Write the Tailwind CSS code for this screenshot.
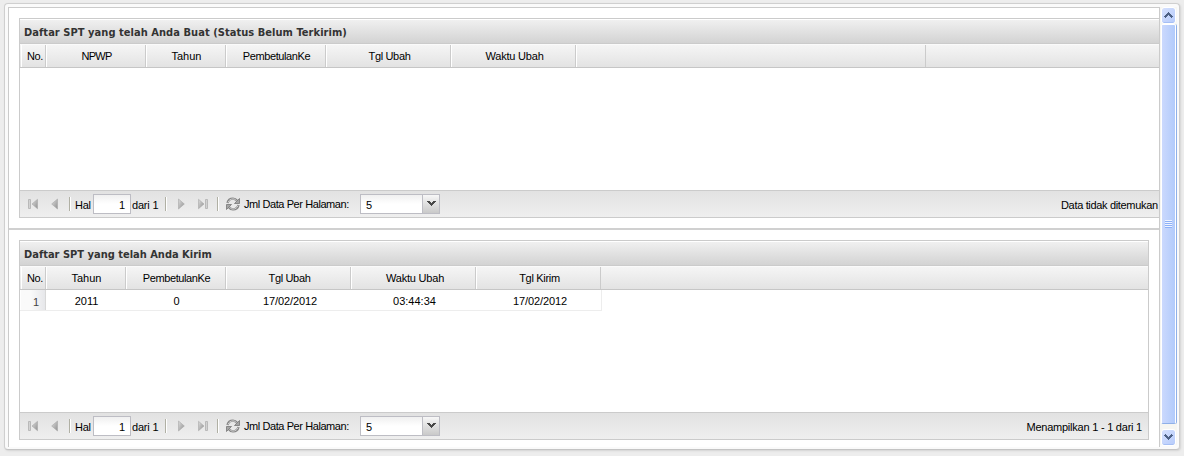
<!DOCTYPE html>
<html lang="id">
<head>
    <meta charset="UTF-8">
    <title>Daftar SPT</title>
    <script src="https://cdn.jsdelivr.net/npm/@tailwindcss/browser@4"></script>
</head>
<body class="bg-[#ededed] w-[1184px] h-[456px] overflow-hidden font-['Liberation_Sans',Arial,sans-serif] text-[11px] leading-[14px] text-black">
    <!-- icons shared by both paging toolbars -->
    <svg class="absolute w-0 h-0">
        <defs>
            <linearGradient id="grey" x1="0" y1="0" x2="1" y2="1">
                <stop offset="0" stop-color="#dedede"/>
                <stop offset="1" stop-color="#8f8f8f"/>
            </linearGradient>
        </defs>
        <symbol id="first" viewBox="0 0 10 12">
            <path d="M.5 1.500h2v9h-2z" fill="#d2d2d2" stroke="#b0b0b0" stroke-width=".8"/>
            <path d="M9.500 1.300v9.400L4 6z" fill="url(#grey)" stroke="#a8a8a8" stroke-width=".6"/>
        </symbol>
        <symbol id="prev" viewBox="0 0 7 12">
            <path d="M6.500 1v10L.7 6z" fill="url(#grey)" stroke="#a8a8a8" stroke-width=".6"/>
        </symbol>
        <symbol id="next" viewBox="0 0 7 12">
            <path d="M.5 1v10L6.300 6z" fill="url(#grey)" stroke="#a8a8a8" stroke-width=".6"/>
        </symbol>
        <symbol id="last" viewBox="0 0 10 12">
            <path d="M.5 1.300v9.400L6 6z" fill="url(#grey)" stroke="#a8a8a8" stroke-width=".6"/>
            <path d="M7.500 1.500h2v9h-2z" fill="#d2d2d2" stroke="#b0b0b0" stroke-width=".8"/>
        </symbol>
        <symbol id="refresh" viewBox="0 0 14 14">
            <path d="M1.500 6C2.200 3 4.600 1.600 7 1.600c1.800 0 3 .8 4 2.200" fill="none" stroke="#858585" stroke-width="2.400"/>
            <path d="M2 5.500C2.600 3.200 4.800 1.900 7 1.900c1.500 0 2.700.7 3.500 1.800" fill="none" stroke="#d0d0d0" stroke-width="1"/>
            <path d="M13.500 1.500v5H8.500z" fill="#a5a5a5" stroke="#6c6c6c" stroke-width=".7"/>
            <path d="M12.500 8C11.800 11 9.400 12.400 7 12.400c-1.800 0-3-.8-4-2.200" fill="none" stroke="#858585" stroke-width="2.400"/>
            <path d="M12 8.500C11.400 10.800 9.200 12.100 7 12.100c-1.500 0-2.700-.7-3.500-1.800" fill="none" stroke="#d0d0d0" stroke-width="1"/>
            <path d="M.5 12.500v-5h5z" fill="#a5a5a5" stroke="#6c6c6c" stroke-width=".7"/>
        </symbol>
        <symbol id="drop" viewBox="0 0 9 6">
            <path d="M0 0h3v1h1v1h1V1h1V0h3v1H8v1H7v1H6v1H5v1H4V4H3V3H2V2H1V1H0z" fill="#484848"/>
        </symbol>
        <symbol id="chevron" viewBox="0 0 9 6">
            <path d="M4 0h1v1h1v1h1v1h1v1h1v1H8v1H7V5H6V4H5V3H4v1H3v1H2v1H1V5H0V4h1V3h1V2h1V1h1z" fill="#4d6185"/>
        </symbol>
    </svg>

    <!-- window frame -->
    <div class="ml-1 mt-[3px] w-[1176px] h-[447px] border border-[#cfcfcf] border-b-[#c4c4c4] bg-[#fafafa] rounded-sm shadow-[1px_1px_2px_#d4d4d4] pl-[3px] pt-[3px] flex">
        <div class="w-[1152px] h-[440px] border-x border-t border-[#cbcbcb] bg-white overflow-hidden">

            <!-- not sent yet -->
            <div class="ml-[10px] mt-[10px] w-[1160px] h-[200px] border border-[#cbcbcb] flex flex-col">
                <div class="h-[25px] shrink-0 border-t border-b border-t-white border-b-[#cbcbcb] bg-linear-to-b from-[#f0f0f0] to-[#d3d3d3] pl-1 pt-[6px] font-['DejaVu_Sans_Condensed','DejaVu_Sans',sans-serif] font-bold text-[#333] whitespace-nowrap tracking-[0.05px]">Daftar SPT yang telah Anda Buat (Status Belum Terkirim)</div>
                <div class="h-6 shrink-0 border-t border-b border-t-[#fafafa] border-b-[#c6c6c6] bg-linear-to-b from-[#f5f5f5] to-[#e3e3e3] flex text-center leading-[23px] pl-px">
                    <div class="w-[25px] pl-[3px] border-r border-l border-l-white border-r-[#cbcbcb] tracking-[-0.3px]">No.</div>
                    <div class="w-[100px] pl-px border-r border-l border-l-white border-r-[#cbcbcb] tracking-[-0.7px]">NPWP</div>
                    <div class="w-20 pl-px border-r border-l border-l-white border-r-[#cbcbcb]">Tahun</div>
                    <div class="w-[100px] pl-px border-r border-l border-l-white border-r-[#cbcbcb] tracking-[-0.4px]">PembetulanKe</div>
                    <div class="w-[125px] pl-[2px] border-r border-l border-l-white border-r-[#cbcbcb] tracking-[-0.35px]">Tgl Ubah</div>
                    <div class="w-[125px] pl-[2px] border-r border-l border-l-white border-r-[#cbcbcb] tracking-[-0.2px]">Waktu Ubah</div>
                    <div class="w-[350px] border-r border-l border-l-white border-r-[#cbcbcb]"></div>
                </div>
                <div class="flex-1"></div>
                <div class="h-[27px] shrink-0 border-t border-[#cbcbcb] bg-linear-to-b from-[#e2e2e2] to-[#efefef] flex items-center whitespace-nowrap">
                    <svg class="ml-2 w-[10px] h-3"><use href="#first"/></svg>
                    <svg class="ml-[13px] w-[7px] h-3"><use href="#prev"/></svg>
                    <div class="ml-[11px] w-[2px] h-[14px] bg-[#b0b0a4] border-r border-white"></div>
                    <div class="ml-1 w-[18px] pt-px tracking-[-0.3px]">Hal</div>
                    <div class="w-[38px] h-5 border border-[#bdbdc4] bg-linear-to-b from-[#f0f0f0] via-white to-white text-right pr-[5px] pt-[3px]">1</div>
                    <div class="ml-px w-[33px] pt-px tracking-[-0.2px]">dari 1</div>
                    <div class="w-[2px] h-[14px] bg-[#b0b0a4] border-r border-white"></div>
                    <svg class="ml-[11px] w-[7px] h-3"><use href="#next"/></svg>
                    <svg class="ml-[13px] w-[10px] h-3"><use href="#last"/></svg>
                    <div class="ml-[9px] w-[2px] h-[14px] bg-[#b0b0a4] border-r border-white"></div>
                    <svg class="ml-[7px] w-[14px] h-[14px]"><use href="#refresh"/></svg>
                    <div class="ml-[4px] w-[116px] pb-px tracking-[-0.42px]">Jml Data Per Halaman:</div>
                    <div class="w-[80px] h-5 border border-[#bdbdc4] bg-linear-to-b from-[#f0f0f0] via-white to-white flex">
                        <div class="flex-1 pl-[5px] pt-[3px]">5</div>
                        <div class="w-[17px] border-l border-[#bdbdc4] bg-linear-to-b from-[#f7f7f7] to-[#c9c9c9] flex items-center justify-center"><svg class="w-[9px] h-[6px]"><use href="#drop"/></svg></div>
                    </div>
                    <div class="ml-auto w-[117px] pt-px tracking-[-0.33px]">Data tidak ditemukan</div>
                </div>
            </div>

            <!-- splitter -->
            <div class="mt-[10px] h-[2px] bg-[#d0d0d0]"></div>

            <!-- sent -->
            <div class="ml-[10px] mt-[10px] w-[1130px] h-[200px] border border-[#cbcbcb] flex flex-col">
                <div class="h-[25px] shrink-0 border-t border-b border-t-white border-b-[#cbcbcb] bg-linear-to-b from-[#f0f0f0] to-[#d3d3d3] pl-1 pt-[6px] font-['DejaVu_Sans_Condensed','DejaVu_Sans',sans-serif] font-bold text-[#333] whitespace-nowrap tracking-[0px]">Daftar SPT yang telah Anda Kirim</div>
                <div class="h-6 shrink-0 border-t border-b border-t-[#fafafa] border-b-[#c6c6c6] bg-linear-to-b from-[#f5f5f5] to-[#e3e3e3] flex text-center leading-[23px] pl-px">
                    <div class="w-[25px] pl-[3px] border-r border-l border-l-white border-r-[#cbcbcb] tracking-[-0.3px]">No.</div>
                    <div class="w-20 pl-px border-r border-l border-l-white border-r-[#cbcbcb]">Tahun</div>
                    <div class="w-[100px] pl-px border-r border-l border-l-white border-r-[#cbcbcb] tracking-[-0.4px]">PembetulanKe</div>
                    <div class="w-[125px] pl-[2px] border-r border-l border-l-white border-r-[#cbcbcb] tracking-[-0.35px]">Tgl Ubah</div>
                    <div class="w-[125px] pl-[3px] border-r border-l border-l-white border-r-[#cbcbcb] tracking-[-0.2px]">Waktu Ubah</div>
                    <div class="w-[125px] pl-[2px] border-r border-l border-l-white border-r-[#cbcbcb] tracking-[-0.3px]">Tgl Kirim</div>
                </div>
                <div class="flex-1">
                    <div class="w-[582px] h-[21px] border-b border-r border-[#ededed] flex text-center leading-[22px] pl-px">
                        <div class="w-[25px] pl-[6px] border-r border-[#d8d8d8] bg-linear-to-r from-[#fafafa] from-40% to-[#e6e7ea] text-[#444] leading-[24px]">1</div>
                        <div class="w-20 pl-px">2011</div>
                        <div class="w-[100px] pl-px">0</div>
                        <div class="w-[125px] pl-[3px] tracking-[-0.1px]">17/02/2012</div>
                        <div class="w-[125px] pl-[2px]">03:44:34</div>
                        <div class="w-[125px] pl-[3px] tracking-[-0.1px]">17/02/2012</div>
                    </div>
                </div>
                <div class="h-[27px] shrink-0 border-t border-[#cbcbcb] bg-linear-to-b from-[#e2e2e2] to-[#efefef] flex items-center whitespace-nowrap">
                    <svg class="ml-2 w-[10px] h-3"><use href="#first"/></svg>
                    <svg class="ml-[13px] w-[7px] h-3"><use href="#prev"/></svg>
                    <div class="ml-[11px] w-[2px] h-[14px] bg-[#b0b0a4] border-r border-white"></div>
                    <div class="ml-1 w-[18px] pt-px tracking-[-0.3px]">Hal</div>
                    <div class="w-[38px] h-5 border border-[#bdbdc4] bg-linear-to-b from-[#f0f0f0] via-white to-white text-right pr-[5px] pt-[3px]">1</div>
                    <div class="ml-px w-[33px] pt-px tracking-[-0.2px]">dari 1</div>
                    <div class="w-[2px] h-[14px] bg-[#b0b0a4] border-r border-white"></div>
                    <svg class="ml-[11px] w-[7px] h-3"><use href="#next"/></svg>
                    <svg class="ml-[13px] w-[10px] h-3"><use href="#last"/></svg>
                    <div class="ml-[9px] w-[2px] h-[14px] bg-[#b0b0a4] border-r border-white"></div>
                    <svg class="ml-[7px] w-[14px] h-[14px]"><use href="#refresh"/></svg>
                    <div class="ml-[4px] w-[116px] pb-px tracking-[-0.42px]">Jml Data Per Halaman:</div>
                    <div class="w-[80px] h-5 border border-[#bdbdc4] bg-linear-to-b from-[#f0f0f0] via-white to-white flex">
                        <div class="flex-1 pl-[5px] pt-[3px]">5</div>
                        <div class="w-[17px] border-l border-[#bdbdc4] bg-linear-to-b from-[#f7f7f7] to-[#c9c9c9] flex items-center justify-center"><svg class="w-[9px] h-[6px]"><use href="#drop"/></svg></div>
                    </div>
                    <div class="ml-auto pr-[6px] pt-px tracking-[-0.23px]">Menampilkan 1 - 1 dari 1</div>
                </div>
            </div>
        </div>

        <!-- scrollbar -->
        <div class="w-[17px] h-[438px] bg-[#f6f6f2] flex flex-col pt-px">
            <div class="h-[15px] ml-[2px] w-[13px] rounded-xs bg-linear-to-br from-[#d5e0fd] to-[#b7ccfb] outline outline-white border-b border-[#a5bff5] flex items-center justify-center"><svg class="w-[9px] h-[6px]"><use href="#chevron"/></svg></div>
            <div class="mt-px flex-1 ml-px w-[15px] rounded-xs border border-white border-b-[#8fb0e8] bg-linear-to-r from-[#cbd9fd] to-[#b2cbfb] shadow-[1px_0_#8fb0e8] flex flex-col items-center justify-center">
                <div class="w-[7px] h-px bg-[#f0f4ff]"></div>
                <div class="w-[7px] h-px bg-[#8cb0f8]"></div>
                <div class="w-[7px] h-px bg-[#f0f4ff]"></div>
                <div class="w-[7px] h-px bg-[#8cb0f8]"></div>
                <div class="w-[7px] h-px bg-[#f0f4ff]"></div>
                <div class="w-[7px] h-px bg-[#8cb0f8]"></div>
                <div class="w-[7px] h-px bg-[#f0f4ff]"></div>
                <div class="w-[7px] h-px bg-[#8cb0f8]"></div>
            </div>
            <div class="mt-[6px] h-[15px] ml-[2px] w-[13px] rounded-xs bg-linear-to-br from-[#d5e0fd] to-[#b7ccfb] outline outline-white border-b border-[#a5bff5] flex items-center justify-center"><svg class="w-[9px] h-[6px] rotate-180"><use href="#chevron"/></svg></div>
        </div>
    </div>
</body>
</html>
